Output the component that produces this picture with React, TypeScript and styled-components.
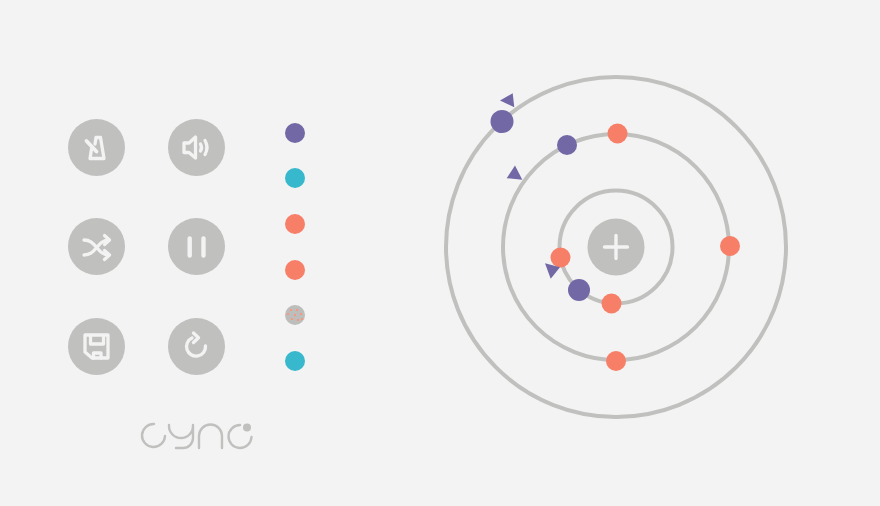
import React from "react";
import styled, { createGlobalStyle } from "styled-components";

const Global = createGlobalStyle`
  html, body { margin: 0; padding: 0; background: #f3f3f3; }
  #root { width: 880px; height: 506px; overflow: hidden; }
`;

const Page = styled.main`
  display: flex;
  align-items: flex-start;
  width: 880px;
  height: 506px;
  padding-left: 68px;
  box-sizing: border-box;
  background: #f3f3f3;
`;

const Controls = styled.section`
  display: flex;
  flex-direction: column;
  width: 157px;
  padding-top: 119px;
`;

const ButtonGrid = styled.div`
  display: grid;
  grid-template-columns: 57px 57px;
  grid-auto-rows: 57px;
  column-gap: 43px;
  row-gap: 42.3px;
`;

const RoundButton = styled.button`
  display: flex;
  align-items: center;
  justify-content: center;
  width: 57px;
  height: 57px;
  padding: 0;
  border: 0;
  border-radius: 50%;
  background: #c0c0be;
  color: #f3f3f3;
`;

const Logo = styled.svg`
  display: block;
  width: 113px;
  height: 32px;
  margin: 45.5px 0 0 72px;
`;

const SwatchColumn = styled.ul`
  display: flex;
  flex-direction: column;
  gap: 25.7px;
  list-style: none;
  margin: 0 0 0 60px;
  padding: 122.5px 0 0;
`;

const Swatch = styled.li<{ $color: string; $speckled?: boolean }>`
  width: 20px;
  height: 20px;
  border-radius: 50%;
  background-color: ${(p) => p.$color};
  ${(p) =>
    p.$speckled
      ? `background-image:
      radial-gradient(circle at 6px 5px, #f7977f 0 .8px, transparent 1.1px),
      radial-gradient(circle at 12px 5px, #f7977f 0 .8px, transparent 1.1px),
      radial-gradient(circle at 3px 9px, #f7977f 0 .8px, transparent 1.1px),
      radial-gradient(circle at 10px 10px, #f7977f 0 .8px, transparent 1.1px),
      radial-gradient(circle at 16px 9px, #f7977f 0 .8px, transparent 1.1px),
      radial-gradient(circle at 7px 14px, #f7977f 0 .8px, transparent 1.1px),
      radial-gradient(circle at 13px 15px, #f7977f 0 .8px, transparent 1.1px),
      radial-gradient(circle at 17px 14px, #f7977f 0 .8px, transparent 1.1px);`
      : ""}
`;

const Orbits = styled.svg`
  display: block;
  flex: none;
  width: 360px;
  height: 360px;
  margin: 66.5px 0 0 131px;
`;

const Icon = styled.svg`
  display: block;
  width: 57px;
  height: 57px;
  fill: none;
  stroke: currentColor;
  stroke-width: 3.3;
  stroke-linecap: round;
  stroke-linejoin: round;
`;

const icons: React.ReactNode[] = [
  <>
    <path d="M23.5 30 L22 39.5 H36 L32.5 18.5 H28 L27 25" />
    <path d="M18.5 22 L28.5 32.5" strokeWidth="3.8" />
  </>,
  <>
    <path d="M16 24 H21 L27.5 18 V39 L21 33.5 H16 Z" />
    <path d="M32.5 25 Q34.5 28.5 32.5 32" />
    <path d="M37 21.5 Q41 28.5 37 35.5" />
  </>,
  <>
    <path d="M16 22 C22 22 25 25 28.7 29.5 C32 33.5 35 37 41 37" />
    <path d="M16 37 C22 37 25 34 28.7 29.5 C32 25.5 35 22 41 22" />
    <path d="M36.5 17.5 L41.5 22 L36.5 26.5" />
    <path d="M36.5 32.5 L41.5 37 L36.5 41.5" />
  </>,
  <>
    <path d="M21.7 20.5 V37.5" strokeWidth="4.4" />
    <path d="M35.5 20.5 V37.5" strokeWidth="4.4" />
  </>,
  <>
    <path d="M17 17 H40 V40 H24 L17 34 Z" />
    <path d="M22.5 17.5 V26 H35.5 V17.5" />
    <path d="M25.5 40 V35 H33 V40" />
  </>,
  <>
    <path d="M24 20 A9.5 9.5 0 1 0 37.5 28" />
    <path d="M25.5 15 L30.5 19.8 L25.5 24.5" />
  </>,
];

const swatches = [
  { color: "#7268a6" },
  { color: "#37b8cd" },
  { color: "#f77f68" },
  { color: "#f77f68" },
  { color: "#bdbdbb", speckled: true },
  { color: "#37b8cd" },
];

const CX = 180;
const CY = 180;
const at = (x: number, y: number) => ({ cx: x - 436, cy: y - 66.5 });
const tri = (pts: number[][]) => pts.map(([x, y]) => `${x - 436},${y - 66.5}`).join(" ");

const corals = [
  [617.5, 133],
  [730, 245.5],
  [616, 360.5],
  [560.5, 257],
  [611.5, 303],
];
const purples = [
  [502, 121, 11.5],
  [567, 144.5, 10],
  [579, 289.5, 11],
];
const triangles = [
  [[500, 100], [512.7, 92.7], [514.3, 106.7]],
  [[515, 165], [506.7, 177.7], [522.3, 179.3]],
  [[545, 262.7], [560, 266.7], [550.7, 278.3]],
];

export default function App() {
  return (
    <Page>
      <Global />
      <Controls>
        <ButtonGrid>
          {icons.map((icon, i) => (
            <RoundButton key={i}>
              <Icon viewBox="0 0 57 57">{icon}</Icon>
            </RoundButton>
          ))}
        </ButtonGrid>
        <Logo viewBox="0 0 113 32" fill="none" stroke="#c0c0be" strokeWidth="2.4" strokeLinecap="round">
          <path d="M14 4 A11.5 11.5 0 1 0 25 16" />
          <path d="M29 5 V6 A12 12 0 0 0 53 6 V5 M53 6 V18 A10 10 0 0 1 43 28 H36" />
          <path d="M59 28 V16 A11.5 11.5 0 0 1 82 16 V28" />
          <path d="M100 5 A11.5 11.5 0 1 0 111.5 17" />
          <circle cx="107" cy="7.5" r="4" fill="#c0c0be" stroke="none" />
        </Logo>
      </Controls>
      <SwatchColumn>
        {swatches.map((s, i) => (
          <Swatch key={i} $color={s.color} $speckled={s.speckled} />
        ))}
      </SwatchColumn>
      <Orbits viewBox="0 0 360 360">
        <g fill="none" stroke="#c0c0be" strokeWidth="4">
          <circle cx={CX} cy={CY} r="170" />
          <circle cx={CX} cy={CY} r="113" />
          <circle cx={CX} cy={CY} r="56.5" />
        </g>
        <circle cx={CX} cy={CY} r="28.5" fill="#c0c0be" />
        <path d={`M${CX} ${CY - 11.5} V${CY + 11.5} M${CX - 11.5} ${CY} H${CX + 11.5}`} stroke="#f3f3f3" strokeWidth="3.4" strokeLinecap="round" />
        {corals.map(([x, y], i) => (
          <circle key={i} {...at(x, y)} r="10" fill="#f77f68" />
        ))}
        {purples.map(([x, y, r], i) => (
          <circle key={i} {...at(x, y)} r={r} fill="#7268a6" />
        ))}
        {triangles.map((t, i) => (
          <polygon key={i} points={tri(t)} fill="#7268a6" />
        ))}
      </Orbits>
    </Page>
  );
}
